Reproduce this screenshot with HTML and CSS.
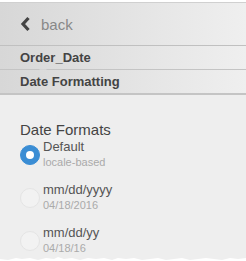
FILE: index.html
```html
<!DOCTYPE html>
<html lang="en">
<head>
  <meta charset="UTF-8">
  <title>Date Formatting</title>
  <link rel="stylesheet" href="styles.css">
</head>
<body>

  <div class="panel">
    <div class="back-row">
      <svg class="back-icon" width="10" height="16" viewBox="0 0 10 16">
        <path d="M8.5 2 L3 8 L8.5 14" fill="none" stroke="#444" stroke-width="3.2"/>
      </svg>
      <span class="back-label">back</span>
    </div>
    <div class="crumb crumb-first">Order_Date</div>
    <div class="crumb crumb-last">Date Formatting</div>

    <div class="content">
      <h2 class="section-title">Date Formats</h2>

      <div class="option">
        <span class="radio checked"></span>
        <div class="option-text">
          <div class="option-name">Default</div>
          <div class="option-sample">locale-based</div>
        </div>
      </div>

      <div class="option">
        <span class="radio"></span>
        <div class="option-text">
          <div class="option-name">mm/dd/yyyy</div>
          <div class="option-sample">04/18/2016</div>
        </div>
      </div>

      <div class="option">
        <span class="radio"></span>
        <div class="option-text">
          <div class="option-name">mm/dd/yy</div>
          <div class="option-sample">04/18/16</div>
        </div>
      </div>
    </div>
  </div>

  <!-- torn bottom edge -->
  <svg class="tear" width="246" height="4" viewBox="0 0 246 4" preserveAspectRatio="none">
    <path d="M0 2 L8 3 L16 1 L22 2 L30 1 L38 3 L46 1 L54 2 L58 0 L64 2 L72 1 L80 3 L88 1 L96 2 L104 1 L112 3 L118 1 L126 2 L134 1 L142 3 L150 2 L158 1 L166 3 L174 2 L182 1 L190 3 L198 2 L206 1 L214 2 L222 3 L230 1 L238 2 L246 1 L246 4 L0 4 Z" fill="#fff"/>
  </svg>

</body>
</html>
```

FILE: styles.css
```css
body {
  margin: 0;
  padding-top: 2px;
  background: #fff;
  font-family: "Liberation Sans", Arial, sans-serif;
  color: #444;
}

.panel {
  background: #eeeeee;
  height: 256px;
  overflow: hidden;
}

.back-row,
.crumb {
  background: linear-gradient(to right, #d7d7d7, #efefef);
  display: flex;
  align-items: center;
  padding-left: 20px;
}

.back-row {
  height: 42px;
  border-top: 1px solid #d0d0d0;
  border-bottom: 1px solid #c0c0c0;
}

.back-icon {
  margin-right: 11px;
}

.back-label {
  font-size: 15px;
  color: #888;
}

.crumb {
  height: 23px;
  border-bottom: 1px solid #c4c4c4;
  font-size: 13px;
  font-weight: bold;
  color: #444;
  position: relative;
}

.crumb-first::after {
  content: "";
  position: absolute;
  left: 39px;
  bottom: -4px;
  border-left: 4px solid transparent;
  border-right: 4px solid transparent;
  border-top: 4px solid #d4d4d4;
}

.crumb-last {
  border-bottom-width: 2px;
}

.content {
  padding: 26px 20px 0;
}

.section-title {
  margin: 0;
  font-size: 15px;
  font-weight: normal;
  line-height: 18px;
  color: #444;
}

.option {
  display: flex;
  align-items: flex-start;
  height: 43px;
}

.radio {
  width: 20px;
  height: 20px;
  border-radius: 50%;
  background: #f2f2f2;
  border: 1px solid #e4e4e4;
  margin-top: 6px;
  margin-right: 3px;
  box-sizing: border-box;
  position: relative;
  flex: none;
}

.radio.checked {
  background: #3a8dd4;
  border-color: #3a8dd4;
}

.radio.checked::after {
  content: "";
  position: absolute;
  left: 5px;
  top: 5px;
  width: 8px;
  height: 8px;
  border-radius: 50%;
  background: #fff;
}

.option-name {
  font-size: 13px;
  line-height: 16px;
  color: #555;
}

.option-sample {
  font-size: 11px;
  line-height: 14px;
  color: #aaa;
}

.tear {
  display: block;
  margin-top: -1px;
  background: #eee;
}
```
